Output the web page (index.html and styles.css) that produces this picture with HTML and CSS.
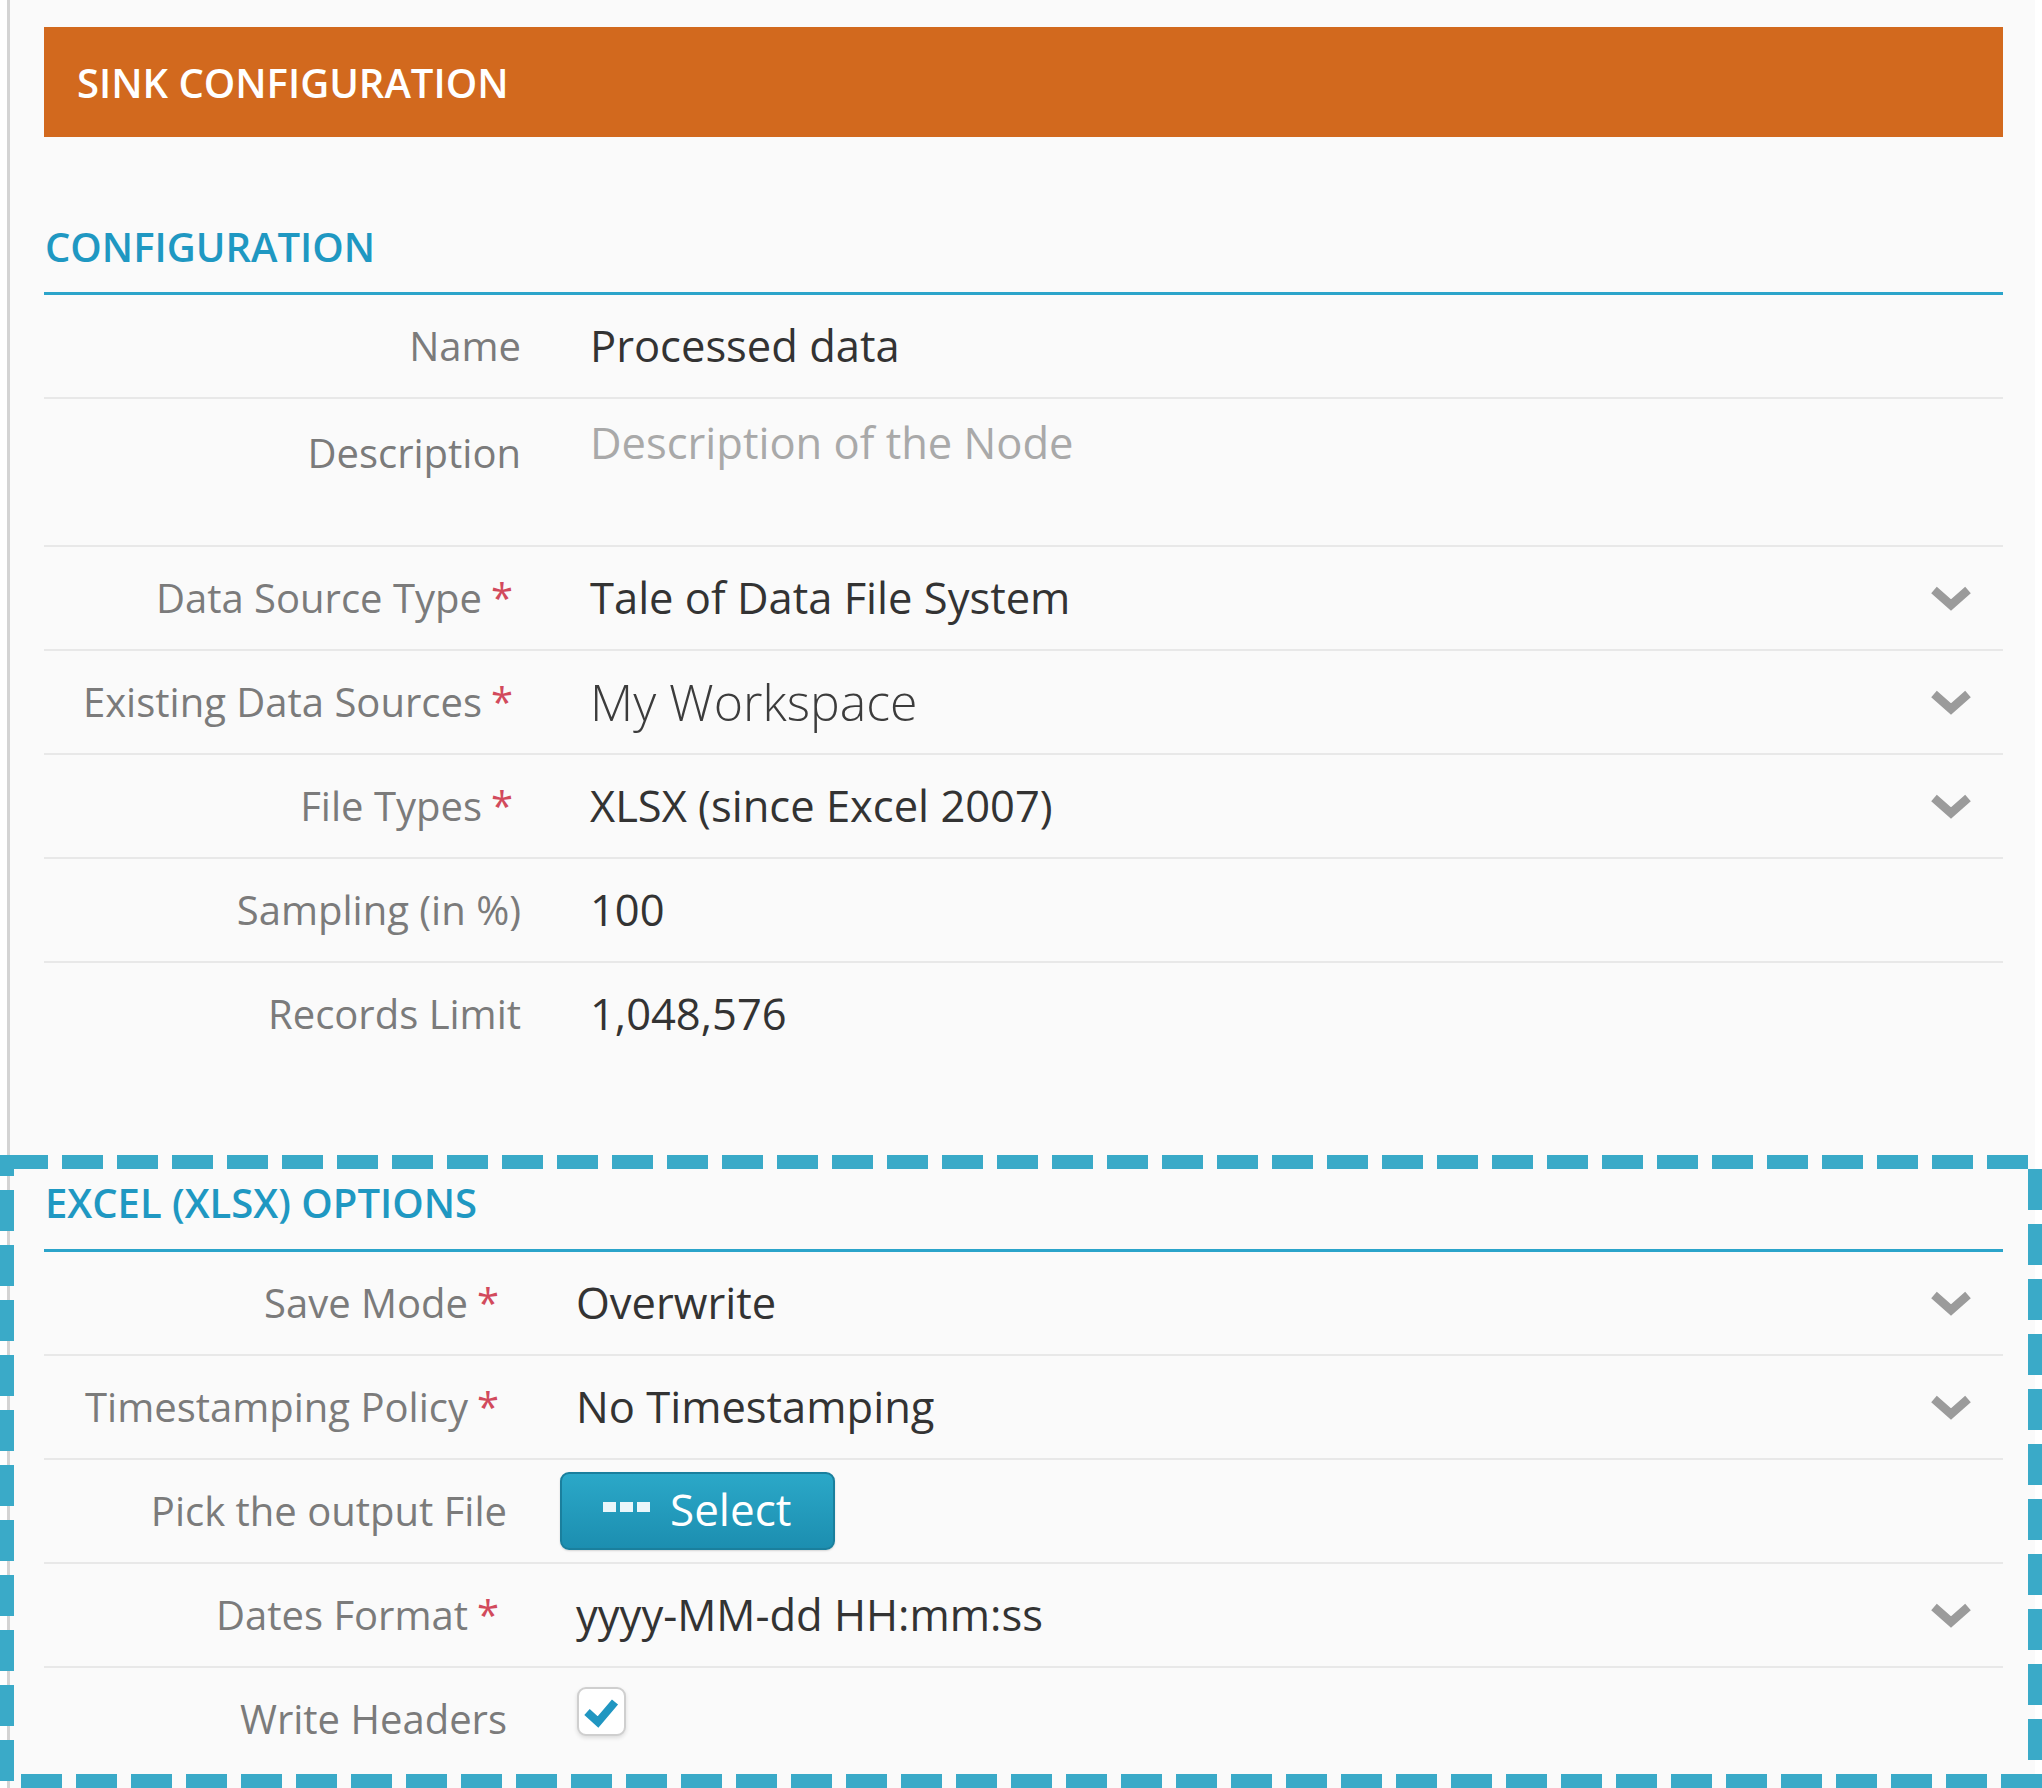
FILE: index.html
```html
<!DOCTYPE html>
<html lang="en">
<head>
<meta charset="utf-8">
<title>Sink configuration</title>
<link rel="stylesheet" href="styles.css">
</head>
<body>
<div class="panel">
  <div class="title-bar">SINK CONFIGURATION</div>

  <section class="section config">
    <h2 class="section-title">CONFIGURATION</h2>
    <div class="row">
      <div class="label">Name</div>
      <div class="value">Processed data</div>
    </div>
    <div class="row row-desc">
      <div class="label">Description</div>
      <div class="value placeholder">Description of the Node</div>
    </div>
    <div class="row">
      <div class="label">Data Source Type<span class="req">*</span></div>
      <div class="value">Tale of Data File System</div>
      <svg class="chev" viewBox="0 0 42 25" width="42" height="25"><polyline points="4,4 21,19 38,4" /></svg>
    </div>
    <div class="row">
      <div class="label">Existing Data Sources<span class="req">*</span></div>
      <div class="value value-light">My Workspace</div>
      <svg class="chev" viewBox="0 0 42 25" width="42" height="25"><polyline points="4,4 21,19 38,4" /></svg>
    </div>
    <div class="row">
      <div class="label">File Types<span class="req">*</span></div>
      <div class="value">XLSX (since Excel 2007)</div>
      <svg class="chev" viewBox="0 0 42 25" width="42" height="25"><polyline points="4,4 21,19 38,4" /></svg>
    </div>
    <div class="row">
      <div class="label">Sampling (in %)</div>
      <div class="value">100</div>
    </div>
    <div class="row">
      <div class="label">Records Limit</div>
      <div class="value">1,048,576</div>
    </div>
  </section>

  <section class="section options">
    <h2 class="section-title">EXCEL (XLSX) OPTIONS</h2>
    <div class="row">
      <div class="label">Save Mode<span class="req">*</span></div>
      <div class="value">Overwrite</div>
      <svg class="chev" viewBox="0 0 42 25" width="42" height="25"><polyline points="4,4 21,19 38,4" /></svg>
    </div>
    <div class="row">
      <div class="label">Timestamping Policy<span class="req">*</span></div>
      <div class="value">No Timestamping</div>
      <svg class="chev" viewBox="0 0 42 25" width="42" height="25"><polyline points="4,4 21,19 38,4" /></svg>
    </div>
    <div class="row">
      <div class="label">Pick the output File</div>
      <div class="value">
        <button class="btn" type="button">
          <svg class="dots" viewBox="0 0 47 10" width="47" height="10"><rect x="0" y="0" width="13" height="10"/><rect x="17" y="0" width="13" height="10"/><rect x="34" y="0" width="13" height="10"/></svg>
          <span>Select</span>
        </button>
      </div>
    </div>
    <div class="row">
      <div class="label">Dates Format<span class="req">*</span></div>
      <div class="value">yyyy-MM-dd HH:mm:ss</div>
      <svg class="chev" viewBox="0 0 42 25" width="42" height="25"><polyline points="4,4 21,19 38,4" /></svg>
    </div>
    <div class="row">
      <div class="label">Write Headers</div>
      <div class="value">
        <span class="checkbox"><svg viewBox="0 0 45 45" width="45" height="45"><polyline points="8,23 19,33 36,13" /></svg></span>
      </div>
    </div>
  </section>
</div>

<svg class="annotation" width="2042" height="1788" viewBox="0 0 2042 1788">
  <line x1="7" y1="1162" x2="2028" y2="1162" />
  <line x1="7" y1="1155" x2="7" y2="1781" stroke-dashoffset="20" />
  <line x1="2035" y1="1169" x2="2035" y2="1788" />
  <line x1="21" y1="1781" x2="2042" y2="1781" />
</svg>
</body>
</html>
```

FILE: styles.css
```css
html, body {
  margin: 0;
  padding: 0;
}

body {
  background: #ffffff;
  font-family: "Open Sans", "Noto Sans", sans-serif;
  width: 2042px;
  height: 1788px;
  overflow: hidden;
  position: relative;
}

.panel {
  margin-left: 7px;
  width: 2028px;
  min-height: 1788px;
  box-sizing: border-box;
  border-left: 3px solid #d4d4d4;
  background: #fafafa;
  padding: 27px 32px 0 34px;
}

.title-bar {
  height: 110px;
  background: #d2691e;
  color: #ffffff;
  font-size: 40px;
  font-weight: 600;
  display: flex;
  align-items: center;
  padding-left: 33px;
}

.section-title {
  margin: 85px 0 0;
  padding: 0 0 20px 1px;
  font-size: 40px;
  line-height: 50px;
  font-weight: 600;
  color: #1f98c2;
  border-bottom: 3px solid #2ba4ca;
}

.options .section-title {
  margin-top: 113px;
  padding-bottom: 21px;
}

.row {
  display: flex;
  align-items: center;
  height: 102px;
  border-bottom: 2px solid #e8e8e8;
  font-size: 40px;
  line-height: 50px;
}

.row:last-child {
  border-bottom: none;
}

.row-desc {
  height: 146px;
  align-items: flex-start;
}

.row-desc .label {
  padding-top: 29px;
}

.row-desc .value {
  padding-top: 19px;
}

.label {
  flex: none;
  width: 477px;
  text-align: right;
  color: #7b7b7b;
  white-space: nowrap;
}

.options .label {
  width: 463px;
}

.req {
  color: #d24a5c;
  padding-left: 9px;
  margin-right: 8px;
}

.value {
  flex: 1;
  margin-left: 69px;
  color: #333333;
  font-size: 43.5px;
  white-space: nowrap;
  display: flex;
  align-items: center;
}

.value-light {
  font-size: 50px;
  font-weight: 300;
  color: #3c3c3c;
}

.placeholder {
  color: #a9a9a9;
}

.chev {
  flex: none;
  margin-right: 31px;
  fill: none;
  stroke: #9b9b9b;
  stroke-width: 8.5;
  stroke-linejoin: miter;
}

.btn {
  margin-left: -16px;
  width: 275px;
  height: 78px;
  box-sizing: border-box;
  border: 2px solid #1a7f9d;
  border-radius: 9px;
  background: linear-gradient(#2ba8c8, #1c8eb0);
  color: #ffffff;
  font-family: "Open Sans", "Noto Sans", sans-serif;
  font-size: 44px;
  display: flex;
  align-items: center;
  gap: 20px;
  padding: 0 0 4px 41px;
  box-shadow: 0 1px 2px rgba(0, 0, 0, 0.15);
}

.dots {
  fill: #eaf6fa;
  margin-top: -4px;
}

.checkbox {
  display: flex;
  align-items: center;
  justify-content: center;
  margin-left: 1px;
  margin-bottom: 16px;
  width: 49px;
  height: 49px;
  box-sizing: border-box;
  border: 2px solid #cfcfcf;
  border-radius: 9px;
  background: #ffffff;
  box-shadow: 0 2px 4px rgba(0, 0, 0, 0.12);
}

.checkbox polyline {
  fill: none;
  stroke: #2096c1;
  stroke-width: 8;
}

.annotation {
  position: absolute;
  top: 0;
  left: 0;
  pointer-events: none;
}

.annotation line {
  stroke: #3aaac8;
  stroke-width: 14;
  stroke-dasharray: 41 14;
}
```
